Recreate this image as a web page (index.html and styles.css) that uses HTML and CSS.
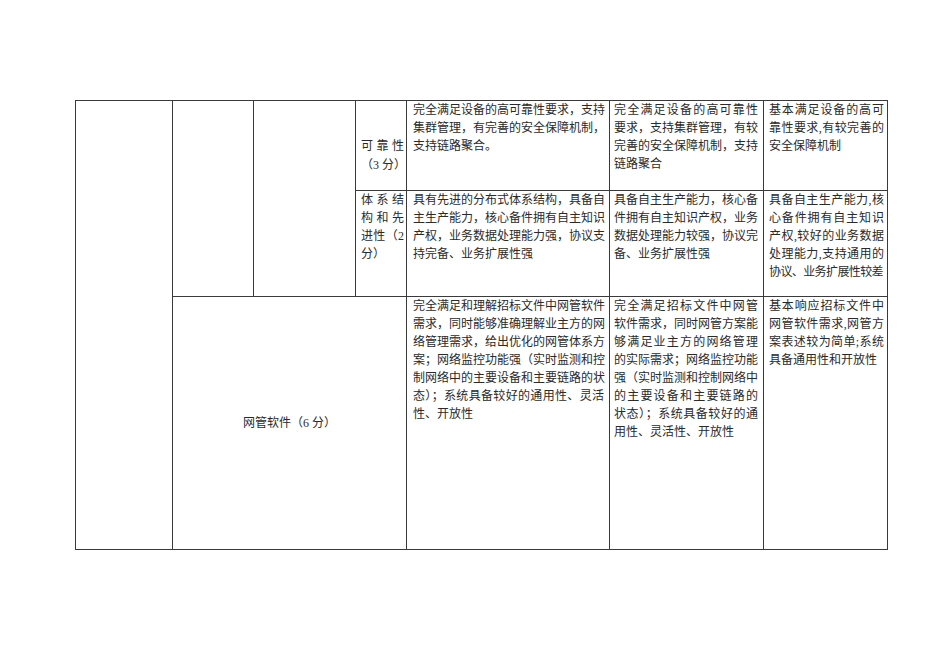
FILE: index.html
```html
<!DOCTYPE html>
<html lang="zh-CN">
<head>
<meta charset="utf-8">
<link rel="stylesheet" href="styles.css">
<title>评分表</title>
</head>
<body>
<div class="page">
<table class="grid">
  <colgroup>
    <col class="c1"><col class="c2"><col class="c3"><col class="c4"><col class="c5"><col class="c6"><col class="c7">
  </colgroup>
  <tbody>
    <tr class="r1">
      <td rowspan="3"></td>
      <td rowspan="2"></td>
      <td rowspan="2"></td>
      <td class="lbl">
        <div class="lbl-top">
          <span class="just">可靠性</span>
          <span class="center">（3 分）</span>
        </div>
      </td>
      <td class="j p5"><span>完全满足设备的高可靠性要求，支持</span><span>集群管理，有完善的安全保障机制，</span><span>支持链路聚合。</span></td>
      <td class="j p6"><span>完全满足设备的高可靠性</span><span>要求，支持集群管理，有较</span><span>完善的安全保障机制，支持</span><span>链路聚合</span></td>
      <td class="j p7"><span>基本满足设备的高可</span><span>靠性要求,有较完善的</span><span>安全保障机制</span></td>
    </tr>
    <tr class="r2">
      <td class="j lbl"><span>体系结</span><span>构和先</span><span>进性（2</span><span>分）</span></td>
      <td class="j p5"><span>具有先进的分布式体系结构，具备自</span><span>主生产能力，核心备件拥有自主知识</span><span>产权，业务数据处理能力强，协议支</span><span>持完备、业务扩展性强</span></td>
      <td class="j p6"><span>具备自主生产能力，核心备</span><span>件拥有自主知识产权，业务</span><span>数据处理能力较强，协议完</span><span>备、业务扩展性强</span></td>
      <td class="j p7"><span>具备自主生产能力,核</span><span>心备件拥有自主知识</span><span>产权,较好的业务数据</span><span>处理能力,支持通用的</span><span class="tight">协议、业务扩展性较差</span></td>
    </tr>
    <tr class="r3">
      <td colspan="3" class="merged">网管软件（6 分）</td>
      <td class="j p5"><span>完全满足和理解招标文件中网管软件</span><span>需求，同时能够准确理解业主方的网</span><span>络管理需求，给出优化的网管体系方</span><span>案；网络监控功能强（实时监测和控</span><span>制网络中的主要设备和主要链路的状</span><span>态）；系统具备较好的通用性、灵活</span><span>性、开放性</span></td>
      <td class="j p6"><span>完全满足招标文件中网管</span><span>软件需求，同时网管方案能</span><span>够满足业主方的网络管理</span><span>的实际需求；网络监控功能</span><span>强（实时监测和控制网络中</span><span>的主要设备和主要链路的</span><span>状态）；系统具备较好的通</span><span>用性、灵活性、开放性</span></td>
      <td class="j p7"><span>基本响应招标文件中</span><span>网管软件需求,网管方</span><span>案表述较为简单;系统</span><span>具备通用性和开放性</span></td>
    </tr>
  </tbody>
</table>
</div>
</body>
</html>
```

FILE: styles.css
```css
html, body {
  margin: 0;
  padding: 0;
  background: #ffffff;
}

.page {
  padding: 100px 0 0 75px;
  font-family: "Liberation Serif", "Noto Sans CJK SC", serif;
  font-size: 12px;
  line-height: 18px;
  color: #2a2a2a;
}

.grid {
  border-collapse: collapse;
  table-layout: fixed;
  width: 813px;
}

.c1 { width: 97px; }
.c2 { width: 81px; }
.c3 { width: 102px; }
.c4 { width: 51px; }
.c5 { width: 203px; }
.c6 { width: 154px; }
.c7 { width: 124px; }

.grid td {
  border: 1px solid #3a3a3a;
  vertical-align: top;
  padding: 0;
}

.r1 { height: 90px; }
.r2 { height: 106px; }
.r3 { height: 253px; }

.j span {
  display: block;
  text-align: justify;
  text-align-last: justify;
  white-space: nowrap;
}

.j span:last-child {
  text-align-last: left;
}

.j span.tight {
  text-align-last: left;
  letter-spacing: -0.6px;
}

.grid td.p5 { padding: 0 5px 0 6px; }
.grid td.p6 { padding: 0 5px 0 4px; }
.grid td.p7 { padding: 0 3px 0 5px; }
.grid td.lbl { padding: 0 2px 0 5px; }

.lbl-top { margin-top: 36px; }

.lbl .just {
  display: block;
  text-align: justify;
  text-align-last: justify;
}

.lbl .center {
  display: block;
  text-align: center;
  padding-top: 1px;
}

.grid td.merged {
  vertical-align: middle;
  text-align: center;
}
```
